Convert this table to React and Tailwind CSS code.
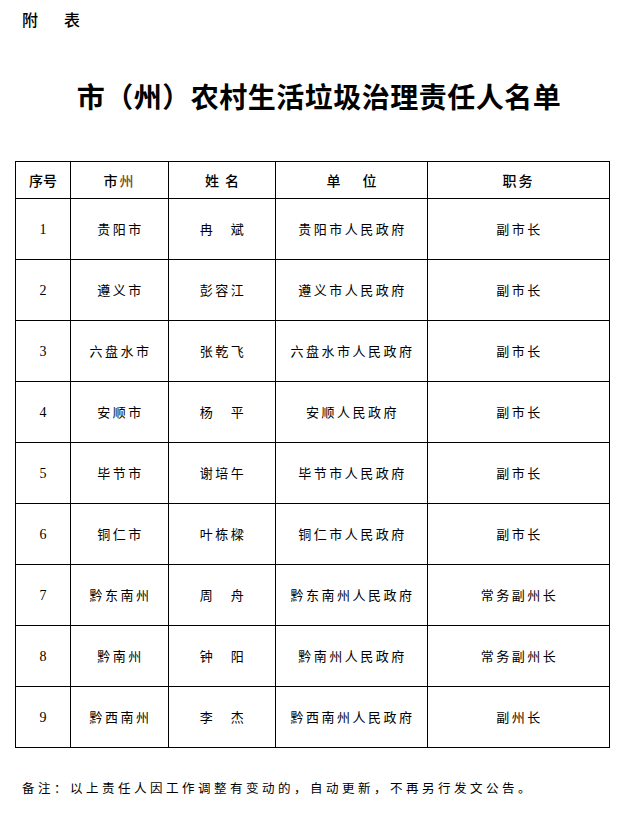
import React from 'react';

const rows = [
  ['1', '贵阳市', '冉　斌', '贵阳市人民政府', '副市长'],
  ['2', '遵义市', '彭容江', '遵义市人民政府', '副市长'],
  ['3', '六盘水市', '张乾飞', '六盘水市人民政府', '副市长'],
  ['4', '安顺市', '杨　平', '安顺人民政府', '副市长'],
  ['5', '毕节市', '谢培午', '毕节市人民政府', '副市长'],
  ['6', '铜仁市', '叶栋樑', '铜仁市人民政府', '副市长'],
  ['7', '黔东南州', '周　舟', '黔东南州人民政府', '常务副州长'],
  ['8', '黔南州', '钟　阳', '黔南州人民政府', '常务副州长'],
  ['9', '黔西南州', '李　杰', '黔西南州人民政府', '副州长'],
];

const cjk = "font-['Noto_Sans_CJK_SC',sans-serif]";

export default function App() {
  return (
    <div className={`w-[638px] h-[813px] bg-white text-black ${cjk}`}>
      {/* 附表 */}
      <div className="pt-[8px] pl-[22px] text-[16px] leading-[22px] font-medium tracking-[26px]">
        附表
      </div>

      {/* title */}
      <h1 className="mt-[48px] text-center text-[28px] leading-[36px] font-bold tracking-[0.5px]">
        市（州）农村生活垃圾治理责任人名单
      </h1>

      {/* table */}
      <table className="mt-[47px] ml-[15px] w-[594px] border-collapse table-fixed">
        <colgroup>
          <col className="w-[55px]" />
          <col className="w-[98px]" />
          <col className="w-[107px]" />
          <col className="w-[152px]" />
          <col className="w-[182px]" />
        </colgroup>
        <thead>
          <tr className="h-[37px] text-[14px] font-medium">
            <th className="border-[1.5px] border-black font-medium">序号</th>
            <th className="border-[1.5px] border-black font-medium tracking-[2px]">
              市<span className="text-[#7a4a2a]">州</span>
            </th>
            <th className="border-[1.5px] border-black font-medium tracking-[6px] pl-[6px]">姓名</th>
            <th className="border-[1.5px] border-black font-medium tracking-[22px] pl-[22px]">单位</th>
            <th className="border-[1.5px] border-black font-medium tracking-[2px]">职务</th>
          </tr>
        </thead>
        <tbody className="text-[13px]">
          {rows.map((r) => (
            <tr key={r[0]} className="h-[61px]">
              <td className="border-[1.5px] border-black text-center font-['Liberation_Serif',serif] text-[14px]">
                {r[0]}
              </td>
              <td className="border-[1.5px] border-black text-center tracking-[2.5px] pl-[2px]">{r[1]}</td>
              <td className="border-[1.5px] border-black text-center tracking-[2.5px] pl-[2px]">{r[2]}</td>
              <td className="border-[1.5px] border-black text-center tracking-[2.5px] pl-[2px]">{r[3]}</td>
              <td className="border-[1.5px] border-black text-center tracking-[2.5px] pl-[2px]">{r[4]}</td>
            </tr>
          ))}
        </tbody>
      </table>

      {/* note */}
      <p className="mt-[31px] pl-[22px] text-[12.5px] leading-[18px] tracking-[3.5px]">
        备注：以上责任人因工作调整有变动的，自动更新，不再另行发文公告。
      </p>
    </div>
  );
}
